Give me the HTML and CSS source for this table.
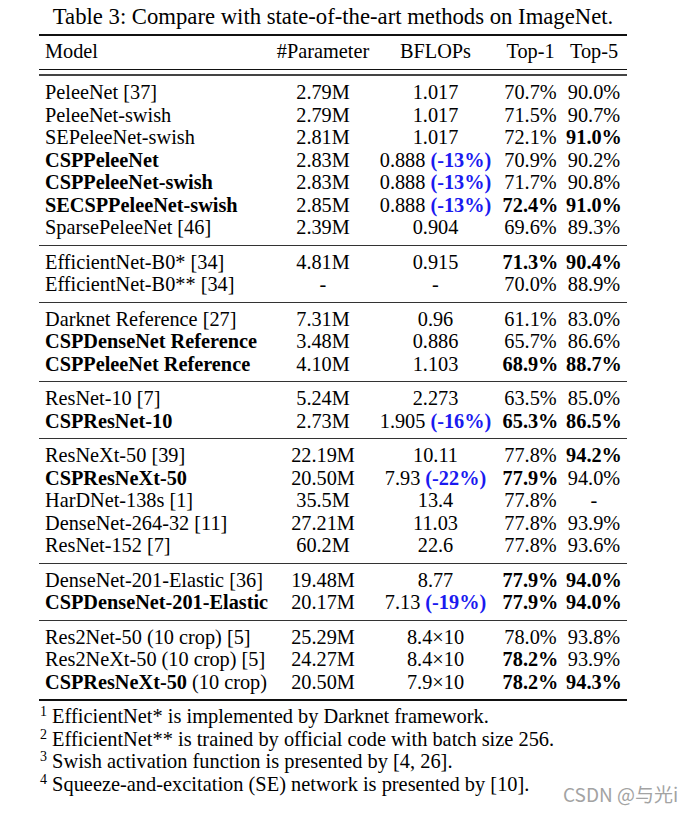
FILE: index.html
```html
<!DOCTYPE html>
<html lang="en">
<head>
<meta charset="utf-8">
<title>Table 3</title>
<link rel="stylesheet" href="styles.css">
</head>
<body>
<div class="page">
  <div class="caption">Table 3: Compare with state-of-the-art methods on ImageNet.</div>
  <div class="table">
    <div class="row head">
      <div class="c model">Model</div>
      <div class="c">#Parameter</div>
      <div class="c">BFLOPs</div>
      <div class="c">Top-1</div>
      <div class="c">Top-5</div>
    </div>
    <div class="double-rule"></div>

    <div class="group">
      <div class="row"><div class="c model">PeleeNet [37]</div><div class="c">2.79M</div><div class="c">1.017</div><div class="c">70.7%</div><div class="c">90.0%</div></div>
      <div class="row"><div class="c model">PeleeNet-swish</div><div class="c">2.79M</div><div class="c">1.017</div><div class="c">71.5%</div><div class="c">90.7%</div></div>
      <div class="row"><div class="c model">SEPeleeNet-swish</div><div class="c">2.81M</div><div class="c">1.017</div><div class="c">72.1%</div><div class="c b">91.0%</div></div>
      <div class="row"><div class="c model b">CSPPeleeNet</div><div class="c">2.83M</div><div class="c">0.888 <span class="delta">(-13%)</span></div><div class="c">70.9%</div><div class="c">90.2%</div></div>
      <div class="row"><div class="c model b">CSPPeleeNet-swish</div><div class="c">2.83M</div><div class="c">0.888 <span class="delta">(-13%)</span></div><div class="c">71.7%</div><div class="c">90.8%</div></div>
      <div class="row"><div class="c model b">SECSPPeleeNet-swish</div><div class="c">2.85M</div><div class="c">0.888 <span class="delta">(-13%)</span></div><div class="c b">72.4%</div><div class="c b">91.0%</div></div>
      <div class="row"><div class="c model">SparsePeleeNet [46]</div><div class="c">2.39M</div><div class="c">0.904</div><div class="c">69.6%</div><div class="c">89.3%</div></div>
    </div>

    <div class="group">
      <div class="row"><div class="c model">EfficientNet-B0* [34]</div><div class="c">4.81M</div><div class="c">0.915</div><div class="c b">71.3%</div><div class="c b">90.4%</div></div>
      <div class="row"><div class="c model">EfficientNet-B0** [34]</div><div class="c">-</div><div class="c">-</div><div class="c">70.0%</div><div class="c">88.9%</div></div>
    </div>

    <div class="group">
      <div class="row"><div class="c model">Darknet Reference [27]</div><div class="c">7.31M</div><div class="c">0.96</div><div class="c">61.1%</div><div class="c">83.0%</div></div>
      <div class="row"><div class="c model b">CSPDenseNet Reference</div><div class="c">3.48M</div><div class="c">0.886</div><div class="c">65.7%</div><div class="c">86.6%</div></div>
      <div class="row"><div class="c model b">CSPPeleeNet Reference</div><div class="c">4.10M</div><div class="c">1.103</div><div class="c b">68.9%</div><div class="c b">88.7%</div></div>
    </div>

    <div class="group">
      <div class="row"><div class="c model">ResNet-10 [7]</div><div class="c">5.24M</div><div class="c">2.273</div><div class="c">63.5%</div><div class="c">85.0%</div></div>
      <div class="row"><div class="c model b">CSPResNet-10</div><div class="c">2.73M</div><div class="c">1.905 <span class="delta">(-16%)</span></div><div class="c b">65.3%</div><div class="c b">86.5%</div></div>
    </div>

    <div class="group">
      <div class="row"><div class="c model">ResNeXt-50 [39]</div><div class="c">22.19M</div><div class="c">10.11</div><div class="c">77.8%</div><div class="c b">94.2%</div></div>
      <div class="row"><div class="c model b">CSPResNeXt-50</div><div class="c">20.50M</div><div class="c">7.93 <span class="delta">(-22%)</span></div><div class="c b">77.9%</div><div class="c">94.0%</div></div>
      <div class="row"><div class="c model">HarDNet-138s [1]</div><div class="c">35.5M</div><div class="c">13.4</div><div class="c">77.8%</div><div class="c">-</div></div>
      <div class="row"><div class="c model">DenseNet-264-32 [11]</div><div class="c">27.21M</div><div class="c">11.03</div><div class="c">77.8%</div><div class="c">93.9%</div></div>
      <div class="row"><div class="c model">ResNet-152 [7]</div><div class="c">60.2M</div><div class="c">22.6</div><div class="c">77.8%</div><div class="c">93.6%</div></div>
    </div>

    <div class="group">
      <div class="row"><div class="c model">DenseNet-201-Elastic [36]</div><div class="c">19.48M</div><div class="c">8.77</div><div class="c b">77.9%</div><div class="c b">94.0%</div></div>
      <div class="row"><div class="c model b">CSPDenseNet-201-Elastic</div><div class="c">20.17M</div><div class="c">7.13 <span class="delta">(-19%)</span></div><div class="c b">77.9%</div><div class="c b">94.0%</div></div>
    </div>

    <div class="group last">
      <div class="row"><div class="c model">Res2Net-50 (10 crop) [5]</div><div class="c">25.29M</div><div class="c">8.4×10</div><div class="c">78.0%</div><div class="c">93.8%</div></div>
      <div class="row"><div class="c model">Res2NeXt-50 (10 crop) [5]</div><div class="c">24.27M</div><div class="c">8.4×10</div><div class="c b">78.2%</div><div class="c">93.9%</div></div>
      <div class="row"><div class="c model"><span class="b">CSPResNeXt-50</span> (10 crop)</div><div class="c">20.50M</div><div class="c">7.9×10</div><div class="c b">78.2%</div><div class="c b">94.3%</div></div>
    </div>
  </div>

  <div class="notes">
    <div class="note"><sup class="fn">1</sup> EfficientNet* is implemented by Darknet framework.</div>
    <div class="note"><sup class="fn">2</sup> EfficientNet** is trained by official code with batch size 256.</div>
    <div class="note"><sup class="fn">3</sup> Swish activation function is presented by [4, 26].</div>
    <div class="note"><sup class="fn">4</sup> Squeeze-and-excitation (SE) network is presented by [10].</div>
  </div>

  <div class="watermark">CSDN @与光i</div>
</div>
</body>
</html>
```

FILE: styles.css
```css
html, body {
  margin: 0;
  padding: 0;
  background: #ffffff;
}

.page {
  position: relative;
  width: 694px;
  height: 813px;
  font-family: "Liberation Serif", "Times New Roman", serif;
  font-size: 20.3px;
  color: #000;
}

.caption {
  width: 588px;
  margin-left: 39px;
  height: 34px;
  line-height: 34px;
  font-size: 22.7px;
  text-align: center;
  white-space: nowrap;
}

.table {
  width: 588px;
  margin-left: 39px;
  border-top: 2px solid #111;
}

.row {
  display: grid;
  grid-template-columns: 236px 96px 129px 61px 66px;
  height: 22.5px;
  line-height: 22.5px;
  white-space: nowrap;
}

.row.head {
  height: 33px;
  line-height: 30px;
}

.c {
  text-align: center;
}

.c.model {
  text-align: left;
  padding-left: 6px;
}

.b {
  font-weight: bold;
}

.delta {
  font-weight: bold;
  color: #1a1af0;
}

.double-rule {
  height: 4px;
  border-top: 1px solid #111;
  border-bottom: 2px solid #444;
}

.group {
  padding: 5px 0 6px;
  border-bottom: 1px solid #333;
}

.group.last {
  border-bottom: 2px solid #111;
}

.notes {
  margin-left: 40px;
  padding-top: 4px;
  font-size: 20.4px;
}

.note {
  height: 22.67px;
  line-height: 22.67px;
  white-space: nowrap;
}

.fn {
  font-size: 14px;
  line-height: 0;
  vertical-align: 7px;
}

.watermark {
  position: absolute;
  left: 563px;
  top: 783px;
  font-family: "Noto Sans CJK SC", "Liberation Sans", sans-serif;
  font-size: 19px;
  line-height: 22px;
  color: #a3a3a3;
  white-space: nowrap;
}
```
